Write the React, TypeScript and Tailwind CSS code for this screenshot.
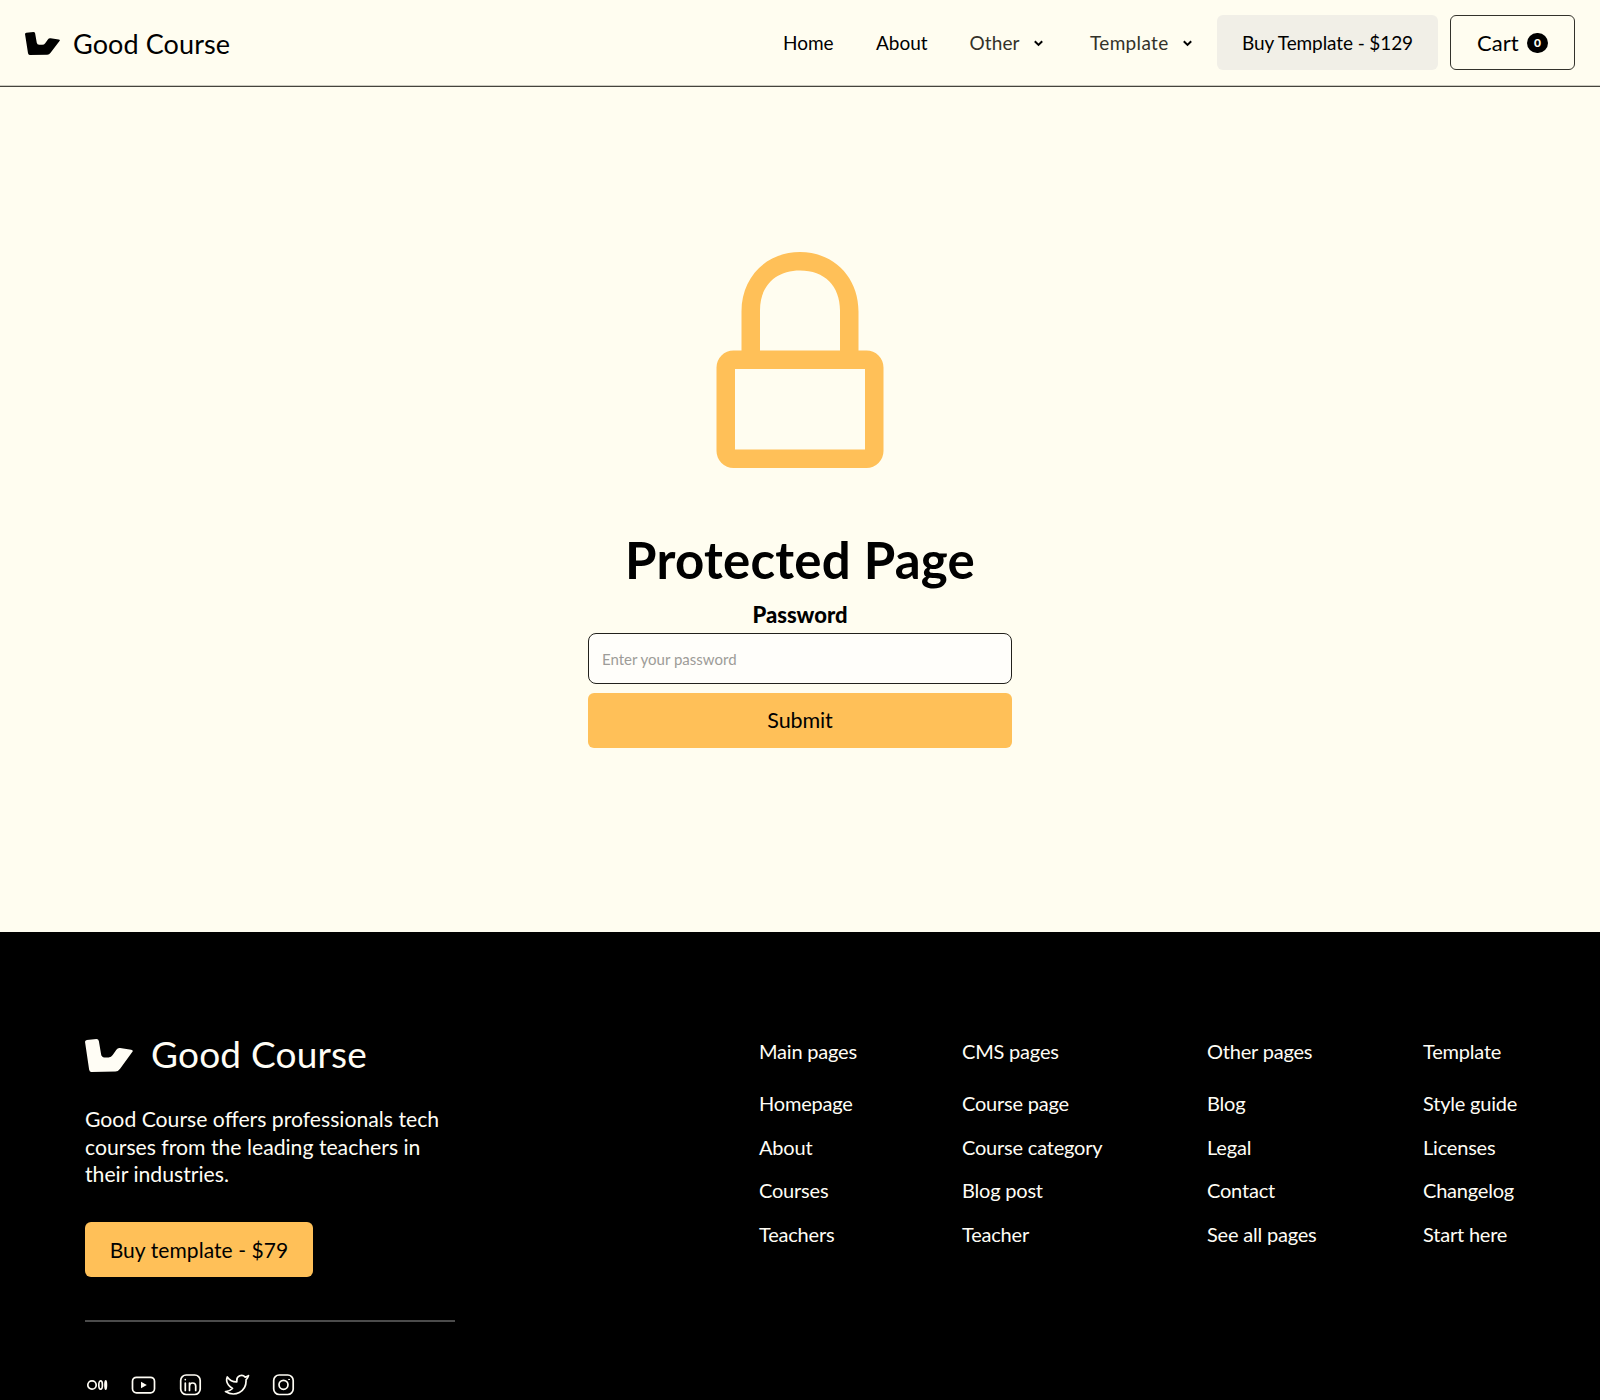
import type { ReactNode } from "react";

function LogoMark({ className }: { className: string }) {
  return (
    <svg viewBox="0 0 104 70" className={className} fill="currentColor" preserveAspectRatio="none">
      <path d="M0 6Q0 3 4 2L25 0Q29 0 30 4L35 33Q36 39 42 39H51Q57 39 60 34L68 23Q71 18 76 19L100 23Q106 24 102 28L76 63Q72 69 66 69L14 70Q10 70 9 65Z" />
    </svg>
  );
}

function Chevron({ className }: { className: string }) {
  return (
    <svg viewBox="0 0 9 7" className={className} fill="none" stroke="currentColor" strokeWidth="2">
      <path d="M0.8 1.2 4.5 4.9 8.2 1.2" />
    </svg>
  );
}

function Lock() {
  return (
    <svg viewBox="-0.5 0 168 217" className="h-[217px] w-[168px]" fill="#ffc058" fillRule="evenodd">
      <path d="M25 98.5V59.5C25 25 50 0 83.500 0S142 25 142 59.500V98.500H150A17 17 0 0 1 167 115.500V199A17 17 0 0 1 150 216H17A17 17 0 0 1 0 199V115.500A17 17 0 0 1 17 98.500ZM43.500 98.500H123.500V58.500C123.500 34 108 18.500 83.500 18.500S43.500 34 43.500 58.500ZM18.500 117H148.500V197.500H18.500Z" />
    </svg>
  );
}

function Icon({ children }: { children: ReactNode }) {
  return (
    <svg viewBox="0 0 26 26" className="size-[26px]" fill="none" stroke="currentColor" strokeWidth="1.7" strokeLinejoin="round" strokeLinecap="round">
      {children}
    </svg>
  );
}

const columns = [
  { title: "Main pages", width: "w-[203px]", links: ["Homepage", "About", "Courses", "Teachers"] },
  { title: "CMS pages", width: "w-[245px]", links: ["Course page", "Course category", "Blog post", "Teacher"] },
  { title: "Other pages", width: "w-[216px]", links: ["Blog", "Legal", "Contact", "See all pages"] },
  { title: "Template", width: "w-[120px]", links: ["Style guide", "Licenses", "Changelog", "Start here"] },
];

export default function App() {
  return (
    <div className="h-[1400px] w-[1600px] overflow-hidden bg-[#fffdf0] font-['Lato',sans-serif] text-black">
      <header className="flex h-[87px] items-start border-b border-[#45443c] pr-[25px] pl-[25px] shadow-[inset_0_-1px_0_#cbcabf]">
        <a className="mt-[28px] flex items-start text-black">
          <LogoMark className="mt-[4px] h-[23px] w-[35px]" />
          <span className="ml-[13px] text-[27px] leading-[32px] tracking-[0.1px] whitespace-nowrap">Good Course</span>
        </a>
        <nav className="mt-[31px] ml-auto flex text-[19px] leading-[24px] whitespace-nowrap">
          <a className="w-[93px]">Home</a>
          <a className="w-[93.500px]">About</a>
          <a className="flex w-[120.500px] items-center text-[#333229]">
            <span className="w-[64px] tracking-[0.1px]">Other</span>
            <Chevron className="h-[7px] w-[9px] text-black" />
          </a>
          <a className="flex w-[127px] items-center text-[#333229]">
            <span className="w-[93px] tracking-[0.350px]">Template</span>
            <Chevron className="h-[7px] w-[9px] text-black" />
          </a>
        </nav>
        <a className="mt-[15px] flex h-[55px] w-[221px] items-center justify-center rounded-[6px] bg-[#f1efe7] pt-[1px] text-[19px] tracking-[-0.1px] whitespace-nowrap">
          Buy Template - $129
        </a>
        <a className="mt-[15px] ml-[12px] flex h-[55px] w-[125px] items-center rounded-[6px] border border-[#33322b] pl-[26px] text-[22px]">
          <span className="w-[50px]">Cart</span>
          <span className="flex h-[20px] w-[21px] items-center justify-center rounded-full bg-black text-[12px] font-black text-[#fffdf0]">0</span>
        </a>
      </header>

      <main className="flex h-[845px] flex-col items-center pt-[164.500px]">
        <Lock />
        <h1 className="mt-[59px] text-[51px] leading-[64px] font-bold tracking-[0.250px] whitespace-nowrap">Protected Page</h1>
        <form className="flex w-[424px] flex-col">
          <label className="mt-[7px] text-center text-[22px] leading-[32px] font-black">Password</label>
          <input
            placeholder="Enter your password"
            className="mt-[2px] h-[51px] rounded-[8px] border border-[#22211c] bg-[#fffefa] px-[13px] pt-[2px] text-[15px] placeholder:text-[#9d9c98]"
          />
          <button type="button" className="mt-[9px] h-[55px] rounded-[6px] bg-[#ffc058] text-[21.500px] tracking-[-0.100px]">Submit</button>
        </form>
      </main>

      <footer className="flex h-[468px] bg-black pt-[103px] pl-[85px] text-[#fffdf5]">
        <div className="w-[674px]">
          <a className="flex h-[40px] items-start">
            <LogoMark className="mt-[3.500px] h-[33px] w-[48px]" />
            <span className="mt-[-3px] ml-[18px] text-[37px] leading-[44px] tracking-[0.200px] whitespace-nowrap">Good Course</span>
          </a>
          <p className="mt-[31px] w-[380px] text-[21.200px] leading-[27.500px] whitespace-nowrap">
            Good Course offers professionals tech
            <br />
            courses from the leading teachers in
            <br />
            their industries.
          </p>
          <a className="mt-[33px] flex h-[55px] w-[228px] items-center justify-center rounded-[6px] bg-[#ffc058] pt-[1px] text-[21px] tracking-[0.080px] whitespace-nowrap text-black">
            Buy template - $79
          </a>
          <div className="mt-[43px] h-[2px] w-[370px] bg-[#4b4b4b]" />
          <div className="mt-[50px] -ml-[0.500px] flex gap-[20.500px]">
            <Icon>
              <circle cx="7" cy="13" r="4.200" />
              <ellipse cx="15.600" cy="13" rx="1.800" ry="4.200" />
              <ellipse cx="20.700" cy="13" rx="0.700" ry="4.200" />
            </Icon>
            <Icon>
              <rect x="1.500" y="5.300" width="22" height="15.500" rx="4" />
              <path d="M10 9.800 15.800 13 10 16.200Z" fill="currentColor" stroke="none" />
            </Icon>
            <Icon>
              <rect x="2.700" y="3" width="19.500" height="19.500" rx="5.500" />
              <path d="M7.300 11V18.500M7.300 7.500V7.600M11.500 11V18.500M11.500 14C11.500 10 17.700 10 17.700 14V18.500" />
            </Icon>
            <Icon>
              <path d="M24.500 3.600C23.500 4.300 22.400 4.800 21.200 5.100C18 1.600 12.500 4 12.800 8.700V9.800C9 9.900 5.500 8 3.300 4.900C3.300 4.900 1.500 9.500 4.500 13C5.600 14.300 6.900 15.300 8.500 16.500C6.500 18.500 4 19.600 1.500 19.500C11 25.500 22.100 19.500 22.100 8.700L22 7.800C23.200 6.600 24.100 5.200 24.500 3.600Z" />
            </Icon>
            <Icon>
              <rect x="2.700" y="3" width="19.500" height="19.500" rx="5.500" />
              <circle cx="12.500" cy="12.800" r="4.500" />
              <circle cx="18" cy="7.400" r="0.300" fill="currentColor" strokeWidth="1" />
            </Icon>
          </div>
        </div>
        <div className="flex text-[20px] tracking-[-0.200px] whitespace-nowrap">
          {columns.map((col) => (
            <div key={col.title} className={col.width}>
              <h2 className="mt-[4px] leading-[24px]">{col.title}</h2>
              <ul className="mt-[28px] flex flex-col gap-[19.500px]">
                {col.links.map((link) => (
                  <li key={link} className="leading-[24px]">{link}</li>
                ))}
              </ul>
            </div>
          ))}
        </div>
      </footer>
    </div>
  );
}
